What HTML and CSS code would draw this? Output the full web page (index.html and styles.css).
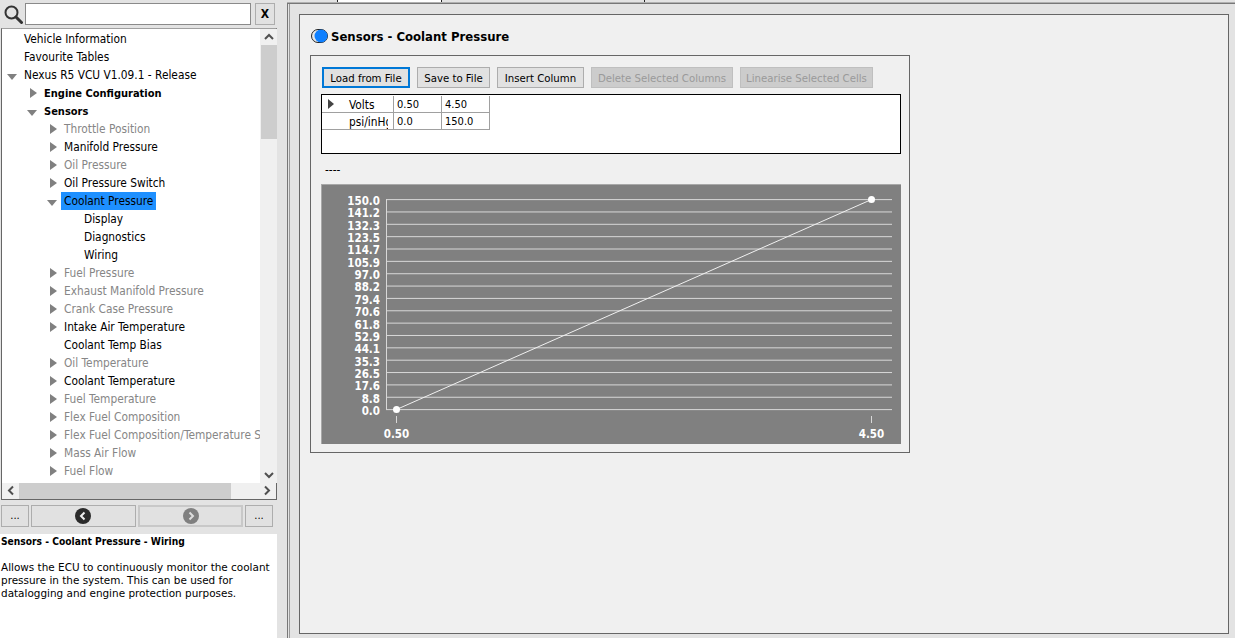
FILE: index.html
```html
<!DOCTYPE html>
<html lang="en">
<head>
<meta charset="utf-8">
<title>Sensors - Coolant Pressure</title>
<link rel="stylesheet" href="styles.css">
</head>
<body>
<div class="app">
  <aside class="side">
    <div class="search">
      <svg class="lens" width="20" height="20" viewBox="0 0 20 20"><circle cx="8.5" cy="8.5" r="6" fill="none" stroke="#333" stroke-width="2"/><path d="M13 13l5.500 5.500" stroke="#333" stroke-width="3" stroke-linecap="round"/></svg>
      <div class="search-input"></div>
      <div class="search-x">X</div>
    </div>
    <div class="treebox">
      <div class="tree-top">
        <div class="tree">
          <div class="row l0"><i class="ar"></i><span class="lb">Vehicle Information</span></div>
          <div class="row l0"><i class="ar"></i><span class="lb">Favourite Tables</span></div>
          <div class="row l0"><i class="ar down"></i><span class="lb">Nexus R5 VCU V1.09.1 - Release</span></div>
          <div class="row l1"><i class="ar right"></i><span class="lb bold">Engine Configuration</span></div>
          <div class="row l1"><i class="ar down"></i><span class="lb bold">Sensors</span></div>
          <div class="row l2 dim"><i class="ar right"></i><span class="lb">Throttle Position</span></div>
          <div class="row l2"><i class="ar right"></i><span class="lb">Manifold Pressure</span></div>
          <div class="row l2 dim"><i class="ar right"></i><span class="lb">Oil Pressure</span></div>
          <div class="row l2"><i class="ar right"></i><span class="lb">Oil Pressure Switch</span></div>
          <div class="row l2"><i class="ar down"></i><span class="lb sel">Coolant Pressure</span></div>
          <div class="row l3"><i class="ar"></i><span class="lb">Display</span></div>
          <div class="row l3"><i class="ar"></i><span class="lb">Diagnostics</span></div>
          <div class="row l3"><i class="ar"></i><span class="lb">Wiring</span></div>
          <div class="row l2 dim"><i class="ar right"></i><span class="lb">Fuel Pressure</span></div>
          <div class="row l2 dim"><i class="ar right"></i><span class="lb">Exhaust Manifold Pressure</span></div>
          <div class="row l2 dim"><i class="ar right"></i><span class="lb">Crank Case Pressure</span></div>
          <div class="row l2"><i class="ar right"></i><span class="lb">Intake Air Temperature</span></div>
          <div class="row l2"><i class="ar"></i><span class="lb">Coolant Temp Bias</span></div>
          <div class="row l2 dim"><i class="ar right"></i><span class="lb">Oil Temperature</span></div>
          <div class="row l2"><i class="ar right"></i><span class="lb">Coolant Temperature</span></div>
          <div class="row l2 dim"><i class="ar right"></i><span class="lb">Fuel Temperature</span></div>
          <div class="row l2 dim"><i class="ar right"></i><span class="lb">Flex Fuel Composition</span></div>
          <div class="row l2 dim"><i class="ar right"></i><span class="lb">Flex Fuel Composition/Temperature Sensor</span></div>
          <div class="row l2 dim"><i class="ar right"></i><span class="lb">Mass Air Flow</span></div>
          <div class="row l2 dim"><i class="ar right"></i><span class="lb">Fuel Flow</span></div>
        </div>
        <div class="vscroll">
          <svg class="sb-arrow" width="16" height="16" viewBox="0 0 16 16"><path d="M4 10l4-4 4 4" fill="none" stroke="#505050" stroke-width="2"/></svg>
          <div class="vthumb"></div>
          <div class="vtrack"></div>
          <svg class="sb-arrow" width="16" height="16" viewBox="0 0 16 16"><path d="M4 6l4 4 4-4" fill="none" stroke="#505050" stroke-width="2"/></svg>
        </div>
      </div>
      <div class="hscroll">
        <svg class="sb-arrow" width="17" height="15" viewBox="0 0 17 15"><path d="M11 3.500l-4 4 4 4" fill="none" stroke="#505050" stroke-width="2"/></svg>
        <div class="hthumb"></div>
        <div class="htrack"></div>
        <svg class="sb-arrow" width="17" height="15" viewBox="0 0 17 15"><path d="M6 3.500l4 4-4 4" fill="none" stroke="#505050" stroke-width="2"/></svg>
      </div>
    </div>
    <div class="nav">
      <div class="nbtn small">...</div>
      <div class="nbtn wide"><svg class="back" width="16" height="16" viewBox="0 0 16 16"><circle cx="8" cy="8" r="8" fill="#2b2b2b"/><path d="M9.500 4.500L6 8l3.500 3.500" fill="none" stroke="#eee" stroke-width="2"/></svg></div>
      <div class="nbtn wide off"><svg width="16" height="16" viewBox="0 0 16 16"><circle cx="8" cy="8" r="8" fill="#808080"/><path d="M6.500 4.500L10 8l-3.500 3.500" fill="none" stroke="#ddd" stroke-width="2"/></svg></div>
      <div class="nbtn small">...</div>
    </div>
    <div class="info">
      <p class="info-title">Sensors - Coolant Pressure - Wiring</p>
      <p class="info-text">Allows the ECU to continuously monitor the coolant pressure in the system. This can be used for datalogging and engine protection purposes.</p>
    </div>
  </aside>
  <main class="work">
    <div class="tabs"><span class="tab-gap a"></span><span class="tab-on"></span><span class="tab-gap b"></span></div>
    <div class="work-body">
      <section class="panel">
        <h1 class="title"><svg class="dot" width="17" height="14" viewBox="0 0 17 14"><rect x="0.500" y="0.500" width="16" height="13" rx="6.500" fill="#e8e8e8" stroke="#222"/><circle cx="10" cy="7" r="6.500" fill="#0f80ff"/></svg><span class="title-text">Sensors - Coolant Pressure</span></h1>
        <div class="box">
          <div class="buttons">
            <button class="btn focus w-load">Load from File</button>
            <button class="btn w-save">Save to File</button>
            <button class="btn w-ins">Insert Column</button>
            <button class="btn off w-del">Delete Selected Columns</button>
            <button class="btn off w-lin">Linearise Selected Cells</button>
          </div>
          <div class="grid">
            <div class="grid-row">
              <div class="hd first"><i class="mini"></i><span>Volts</span></div>
              <div class="cell">0.50</div>
              <div class="cell">4.50</div>
            </div>
            <div class="grid-row">
              <div class="hd"><span class="clip">psi/inHg</span></div>
              <div class="cell">0.0</div>
              <div class="cell">150.0</div>
            </div>
          </div>
          <div class="dash">----</div>
          <svg class="chart" width="580" height="260" viewBox="321 184 580 260">
            <rect x="321" y="184" width="580" height="260" fill="#808080"/>
            <path d="M321 184.500H901M321.500 184V444" stroke="#a8a8a8" fill="none"/>
            <g class="lines">
              <path d="M386 199.600H892M386 211.950H892M386 224.300H892M386 236.660H892M386 249.010H892M386 261.360H892M386 273.720H892M386 286.070H892M386 298.420H892M386 310.780H892M386 323.130H892M386 335.480H892M386 347.840H892M386 360.190H892M386 372.540H892M386 384.900H892M386 397.250H892M386 409.600H892"/>
              <path d="M386.500 199V410"/>
              <path d="M396.500 416V423M871.500 416V423"/>
            </g>
            <path d="M396.500 409.500L871.500 199.500" stroke="#f0f0f0" fill="none"/>
            <circle cx="396.500" cy="409.500" r="3.500" fill="#fff"/>
            <circle cx="871.500" cy="199.500" r="3.500" fill="#fff"/>
            <g class="ylab">
              <text x="380" y="205">150.0</text><text x="380" y="217">141.2</text><text x="380" y="230">132.3</text><text x="380" y="242">123.5</text><text x="380" y="254">114.7</text><text x="380" y="267">105.9</text><text x="380" y="279">97.0</text><text x="380" y="291">88.2</text><text x="380" y="304">79.4</text><text x="380" y="316">70.6</text><text x="380" y="329">61.8</text><text x="380" y="341">52.9</text><text x="380" y="353">44.1</text><text x="380" y="366">35.3</text><text x="380" y="378">26.5</text><text x="380" y="390">17.6</text><text x="380" y="403">8.8</text><text x="380" y="415">0.0</text>
            </g>
            <g class="xlab"><text x="396.500" y="438">0.50</text><text x="871.500" y="438">4.50</text></g>
          </svg>
        </div>
      </section>
    </div>
  </main>
</div>
</body>
</html>
```
FILE: styles.css
```css
* { box-sizing: border-box; }
html, body { margin: 0; height: 100%; overflow: hidden; }
body { background: #e3e3e3; font: 11.800px/18px "DejaVu Sans Condensed", "DejaVu Sans", sans-serif; font-stretch: condensed; color: #000; }
.app { display: flex; width: 1235px; height: 638px; }
.side { width: 277px; flex: none; display: flex; flex-direction: column; }
.search { height: 28px; flex: none; display: flex; align-items: center; padding: 0 0 0 2px; }
.lens { margin-left: 1px; flex: none; }
.search-input { width: 226px; height: 22px; margin-left: 2px; background: #fff; border: 1px solid #8a8a8a; }
.search-x { width: 20px; height: 22px; margin-left: 4px; background: #e1e1e1; border: 1px solid #adadad; font-weight: 700; font-size: 12px; line-height: 20px; text-align: center; }
.treebox { height: 472px; flex: none; margin-left: 1px; border: 1px solid #666; border-top-color: #a0a0a0; display: flex; flex-direction: column; background: #f0f0f0; width: 276px; }
.tree-top { height: 454px; flex: none; display: flex; }
.tree { width: 258px; flex: none; background: #fff; overflow: hidden; padding-top: 1px; }
.row { height: 18px; display: flex; align-items: center; white-space: nowrap; }
.l0 { padding-left: 2px; }
.l1 { padding-left: 22px; }
.l2 { padding-left: 42px; }
.l3 { padding-left: 62px; }
.ar { width: 20px; height: 18px; flex: none; position: relative; }
.ar.right::after { content: ""; position: absolute; left: 6px; top: 4px; border-left: 7px solid #808080; border-top: 5.500px solid transparent; border-bottom: 5.500px solid transparent; }
.ar.down::after { content: ""; position: absolute; left: 3px; top: 8px; border-top: 6px solid #808080; border-left: 5.500px solid transparent; border-right: 5.500px solid transparent; }
.lb { padding: 0 3px; margin-left: -3px; height: 18px; line-height: 18px; }
.bold { font-weight: 700; font-size: 11px; line-height: 20px; }
.dim { color: #868686; }
.sel { background: #1e90ff; }
.vscroll { width: 16px; margin-left: 1px; flex: none; display: flex; flex-direction: column; background: #f0f0f0; }
.vthumb { height: 94px; background: #cdcdcd; flex: none; }
.vtrack { flex: 1; }
.sb-arrow { flex: none; display: block; }
.hscroll { height: 16px; flex: none; display: flex; }
.hthumb { width: 212px; background: #cdcdcd; flex: none; }
.htrack { flex: 1; }
.nav { height: 22px; margin-top: 5px; flex: none; display: flex; gap: 2px; padding-left: 1px; }
.nbtn { display: flex; align-items: center; justify-content: center; height: 22px; background: #e1e1e1; border: 1px solid #adadad; }
.nbtn.small { width: 28px; font-size: 11px; line-height: 14px; }
.nbtn.wide { width: 105px; }
.nbtn.off { border: 2px solid #c8c8c8; }
.back { margin-right: 2px; }
.info { flex: 1; margin-top: 7px; background: #fff; font-family: "DejaVu Sans", sans-serif; font-stretch: normal; font-size: 10.450px; line-height: 13px; padding-left: 1px; }
.info p { margin: 0; }
.info-title { font-weight: 700; height: 27px; padding-top: 1px; line-height: 14px; font-size: 10.200px; font-stretch: condensed; font-family: "DejaVu Sans Condensed", "DejaVu Sans", sans-serif; }
.work { width: 948px; margin-left: 10px; flex: none; display: flex; flex-direction: column; }
.tabs { height: 3px; flex: none; display: flex; border-bottom: 1px solid #b0b0b0; }
.tab-gap.a { width: 50px; }
.tab-on { width: 105px; background: #fff; border-left: 1px solid #222; border-right: 1px solid #222; }
.tab-gap.b { width: 203px; border-right: 1px solid #222; }
.work-body { flex: 1; min-height: 0; border-top: 1px solid #777; border-left: 1px solid #777; padding: 10px 6px 4px 11px; display: flex; position: relative; }
.work-body::before { content: ""; position: absolute; left: 1px; top: 0; bottom: 0; width: 1px; background: #999; }
.panel { flex: 1; background: #f0f0f0; border: 1px solid #666; padding: 11px 10px 0; }
.title { margin: 0 0 9px; height: 20px; display: flex; align-items: center; font-size: 13px; font-weight: 700; line-height: 20px; }
.title-text { padding-top: 1px; }
.dot { margin: 0 3px 0 1px; flex: none; }
.box { width: 600px; height: 398px; border: 1px solid #666; padding: 11px 8px 0 10px; }
.buttons { display: flex; gap: 7px; height: 21px; margin-left: 1px; }
.btn { height: 21px; padding: 1px 0 0; font: inherit; font-size: 11.300px; font-stretch: condensed; line-height: 17px; color: #000; background: #e1e1e1; border: 1px solid #adadad; }
.btn.focus { border: 2px solid #0078d7; }
.btn.off { background: #ccc; border-color: #bfbfbf; color: #9a9a9a; }
.w-load { width: 88px; }
.w-save { width: 73px; }
.w-ins { width: 87px; }
.w-del { width: 142px; }
.w-lin { width: 133px; }
.grid { height: 60px; margin-top: 6px; width: 580px; background: #fff; border: 1px solid #000; padding-top: 1px; }
.grid-row { display: flex; height: 17px; }
.hd { width: 72px; display: flex; align-items: center; position: relative; padding-left: 27px; border-bottom: 1px solid #a0a0a0; border-right: 1px solid #a0a0a0; flex: none; overflow: hidden; padding-top: 1px; }
.clip { width: 39px; overflow: hidden; white-space: nowrap; }
.mini { position: absolute; left: 6px; top: 3px; border-left: 6px solid #444; border-top: 5px solid transparent; border-bottom: 5px solid transparent; }
.cell { width: 48px; flex: none; padding-left: 3px; padding-top: 1px; border-right: 1px solid #a0a0a0; border-bottom: 1px solid #a0a0a0; line-height: 16px; font-size: 11px; }
.dash { height: 30px; line-height: 32px; padding-left: 4px; }
.chart { display: block; }
.lines path { stroke: #d8d8d8; fill: none; }
.ylab text { fill: #fff; font: 700 11.500px "DejaVu Sans Condensed", "DejaVu Sans", sans-serif; font-stretch: condensed; text-anchor: end; }
.xlab text { fill: #fff; font: 700 11.500px "DejaVu Sans Condensed", "DejaVu Sans", sans-serif; font-stretch: condensed; text-anchor: middle; }
```
